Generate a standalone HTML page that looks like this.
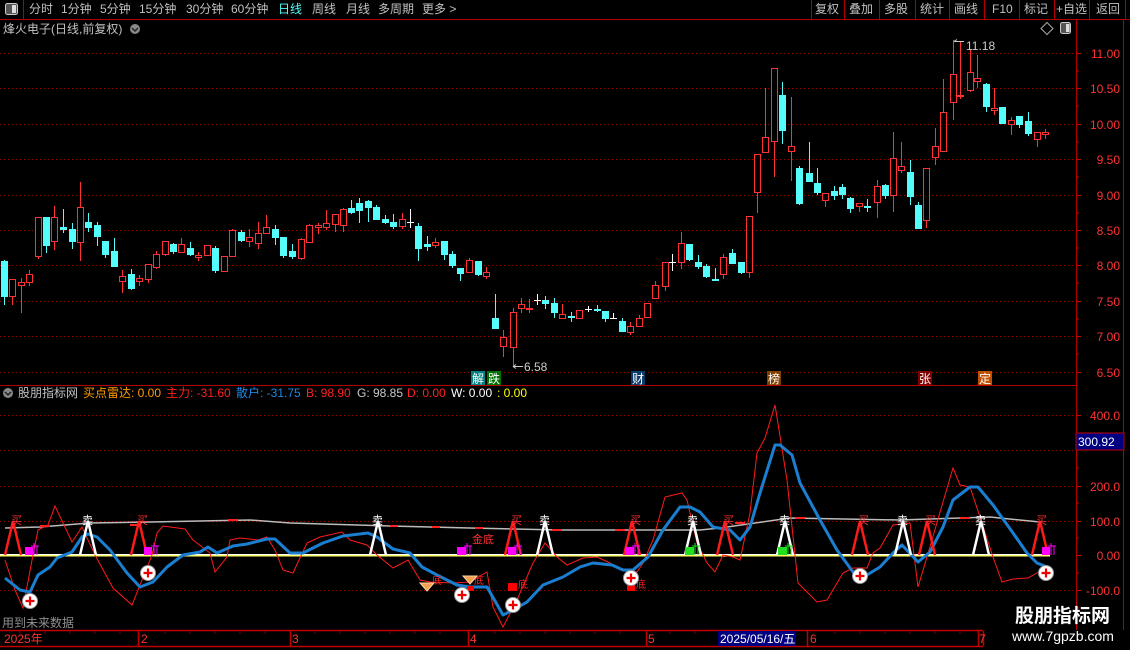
<!DOCTYPE html>
<html><head><meta charset="utf-8">
<style>
html,body{margin:0;padding:0;background:#000;}
body{width:1130px;height:650px;overflow:hidden;position:relative;font-family:"Liberation Sans","Noto Sans CJK SC",sans-serif;font-size:12px;color:#c0c0c0;}
.t{position:absolute;white-space:nowrap;line-height:14px;}
svg{position:absolute;left:0;top:0;}
</style></head><body>
<svg width="1130" height="650" xmlns="http://www.w3.org/2000/svg" font-family="Liberation Sans, Noto Sans CJK SC, sans-serif">
<!-- top nav -->
<g stroke="#b00000" stroke-width="1" fill="none">
<line x1="0" y1="19.5" x2="1130" y2="19.5"/>
<line x1="23.5" y1="0" x2="23.5" y2="19"/>
<line x1="811.5" y1="0" x2="811.5" y2="19"/><line x1="844.5" y1="0" x2="844.5" y2="19"/><line x1="879.5" y1="0" x2="879.5" y2="19"/><line x1="915.5" y1="0" x2="915.5" y2="19"/><line x1="949.5" y1="0" x2="949.5" y2="19"/><line x1="984.5" y1="0" x2="984.5" y2="19"/><line x1="1019.5" y1="0" x2="1019.5" y2="19"/><line x1="1054.5" y1="0" x2="1054.5" y2="19"/><line x1="1089.5" y1="0" x2="1089.5" y2="19"/><line x1="1125.5" y1="0" x2="1125.5" y2="19"/>
<line x1="1076.5" y1="20" x2="1076.5" y2="630"/>
<line x1="1123.5" y1="20" x2="1123.5" y2="630"/>
<line x1="0" y1="385.5" x2="1076" y2="385.5"/>
</g>
<rect x="5.5" y="3.5" width="12" height="11" rx="2" fill="#555" stroke="#ccc"/><rect x="12" y="5" width="4" height="8" fill="#ddd"/>
<rect x="1060.5" y="22.5" width="10" height="11" rx="2" fill="#555" stroke="#ccc"/><rect x="1066" y="24" width="3.5" height="8" fill="#ddd"/>
<path d="M1047 22.5L1053 28.5L1047 34.5L1041 28.5Z" fill="none" stroke="#aaa"/>
<circle cx="135" cy="29" r="5" fill="#888"/><path d="M132 28l3 3 3-3" stroke="#222" stroke-width="1.5" fill="none"/>
<circle cx="8" cy="393" r="5" fill="#888"/><path d="M5 392l3 3 3-3" stroke="#222" stroke-width="1.5" fill="none"/>

<!-- grids price -->
<g stroke="#a00000" stroke-dasharray="1,3" stroke-width="1">
<line x1="0" y1="53.5" x2="1076" y2="53.5"/><line x1="0" y1="88.5" x2="1076" y2="88.5"/><line x1="0" y1="124.5" x2="1076" y2="124.5"/><line x1="0" y1="159.5" x2="1076" y2="159.5"/><line x1="0" y1="195.5" x2="1076" y2="195.5"/><line x1="0" y1="230.5" x2="1076" y2="230.5"/><line x1="0" y1="265.5" x2="1076" y2="265.5"/><line x1="0" y1="301.5" x2="1076" y2="301.5"/><line x1="0" y1="336.5" x2="1076" y2="336.5"/><line x1="0" y1="372.5" x2="1076" y2="372.5"/>
<line x1="0" y1="415.5" x2="1076" y2="415.5"/><line x1="0" y1="450.5" x2="1076" y2="450.5"/><line x1="0" y1="486.5" x2="1076" y2="486.5"/><line x1="0" y1="521.5" x2="1076" y2="521.5"/><line x1="0" y1="590.5" x2="1076" y2="590.5"/>
</g>
<!-- axis ticks -->
<g stroke="#c00000">
<path d="M1076 53.5h5M1076 88.5h5M1076 124.5h5M1076 159.5h5M1076 195.5h5M1076 230.5h5M1076 265.5h5M1076 301.5h5M1076 336.5h5M1076 372.5h5M1076 71h3M1076 106h3M1076 142h3M1076 177h3M1076 213h3M1076 248h3M1076 283h3M1076 319h3M1076 354h3"/>
<path d="M1076 415.5h5M1076 486.5h5M1076 521.5h5M1076 555.5h5M1076 590.5h5M1076 433h3M1076 468h3M1076 503h3M1076 538h3M1076 573h3M1076 608h3"/>
</g>
<g fill="#ff3232" font-size="12" text-anchor="end">
<text x="1120" y="58">11.00</text><text x="1120" y="93">10.50</text><text x="1120" y="129">10.00</text><text x="1120" y="164">9.50</text><text x="1120" y="200">9.00</text><text x="1120" y="235">8.50</text><text x="1120" y="270">8.00</text><text x="1120" y="306">7.50</text><text x="1120" y="341">7.00</text><text x="1120" y="377">6.50</text>
<text x="1120" y="420">400.0</text><text x="1120" y="491">200.0</text><text x="1120" y="526">100.0</text><text x="1120" y="560">0.00</text><text x="1120" y="595">-100.0</text>
</g>
<rect x="1076" y="433" width="48" height="17" fill="#000080" stroke="#c00000"/>
<text x="1078" y="446" fill="#fff" font-size="12">300.92</text>

<!-- candles red -->
<g stroke="#ff3232" fill="#000" stroke-width="1">
<path d="M12.5 279V305M21.5 278V313M29.5 270V286M38.5 217V259M54.5 206V250M80.5 182V261M122.5 270V293M139.5 275V286M148.5 264V283M156.5 251V269M165.5 241V256M181.5 238V252M198.5 252V261M207.5 245V255M224.5 256V271M232.5 229V256M249.5 229V247M258.5 222V249M266.5 215V233M301.5 238V260M309.5 224V243M318.5 223V234M326.5 210V230M335.5 214V232M343.5 208V232M402.5 213V229M435.5 238V248M469.5 258V272M486.5 267V279M503.5 330V357M513.5 308V367M521.5 298V313M529.5 299V313M562.5 304V318M579.5 310V318M630.5 322V335M639.5 315V327M647.5 303V317M655.5 281V298M665.5 262V291M681.5 232V269M723.5 254V279M749.5 216V278M757.5 154V213M765.5 88V152M774.5 68V177M791.5 97V181M825.5 193V207M859.5 203V212M877.5 180V218M893.5 132V212M901.5 142V173M926.5 168V228M935.5 128V165M943.5 79V151M953.5 40V120M960.5 41V99M970.5 50V92M977.5 55V88M994.5 88V115M1011.5 117V135M1037.5 132V147M1045.5 129V139"/>
<rect x="9.5" y="279.5" width="6" height="17"/><rect x="18.5" y="282.5" width="6" height="3"/><rect x="26.5" y="274.5" width="6" height="8"/><rect x="35.5" y="217.5" width="6" height="39"/><rect x="51.5" y="217.5" width="6" height="24"/><rect x="77.5" y="207.5" width="6" height="35"/><rect x="119.5" y="276.5" width="6" height="5"/><rect x="136.5" y="278.5" width="6" height="3"/><rect x="145.5" y="264.5" width="6" height="15"/><rect x="153.5" y="254.5" width="6" height="13"/><rect x="162.5" y="241.5" width="6" height="13"/><rect x="178.5" y="244.5" width="6" height="8"/><rect x="195.5" y="255.5" width="6" height="2"/><rect x="204.5" y="245.5" width="6" height="10"/><rect x="221.5" y="256.5" width="6" height="15"/><rect x="229.5" y="230.5" width="6" height="26"/><rect x="246.5" y="237.5" width="6" height="4"/><rect x="255.5" y="233.5" width="6" height="10"/><rect x="263.5" y="227.5" width="6" height="6"/><rect x="298.5" y="239.5" width="6" height="19"/><rect x="306.5" y="225.5" width="6" height="17"/><rect x="315.5" y="225.5" width="6" height="2"/><rect x="323.5" y="223.5" width="6" height="4"/><rect x="332.5" y="214.5" width="6" height="10"/><rect x="340.5" y="209.5" width="6" height="16"/><rect x="399.5" y="219.5" width="6" height="7"/><rect x="432.5" y="242.5" width="6" height="3"/><rect x="466.5" y="260.5" width="6" height="12"/><rect x="483.5" y="272.5" width="6" height="4"/><rect x="500.5" y="337.5" width="6" height="9"/><rect x="510.5" y="312.5" width="6" height="35"/><rect x="518.5" y="304.5" width="6" height="4"/><rect x="526.5" y="308.5" width="6" height="1"/><rect x="559.5" y="314.5" width="6" height="4"/><rect x="576.5" y="310.5" width="6" height="8"/><rect x="627.5" y="326.5" width="6" height="6"/><rect x="636.5" y="318.5" width="6" height="8"/><rect x="644.5" y="303.5" width="6" height="14"/><rect x="652.5" y="285.5" width="6" height="13"/><rect x="662.5" y="262.5" width="6" height="24"/><rect x="678.5" y="243.5" width="6" height="19"/><rect x="720.5" y="257.5" width="6" height="17"/><rect x="746.5" y="216.5" width="6" height="56"/><rect x="754.5" y="154.5" width="6" height="38"/><rect x="762.5" y="137.5" width="6" height="15"/><rect x="771.5" y="68.5" width="6" height="73"/><rect x="788.5" y="146.5" width="6" height="5"/><rect x="822.5" y="193.5" width="6" height="7"/><rect x="856.5" y="203.5" width="6" height="3"/><rect x="874.5" y="186.5" width="6" height="16"/><rect x="890.5" y="158.5" width="6" height="37"/><rect x="898.5" y="166.5" width="6" height="4"/><rect x="923.5" y="168.5" width="6" height="52"/><rect x="932.5" y="146.5" width="6" height="11"/><rect x="940.5" y="112.5" width="6" height="39"/><rect x="950.5" y="74.5" width="6" height="28"/><rect x="957.5" y="95.5" width="6" height="1"/><rect x="967.5" y="72.5" width="6" height="18"/><rect x="974.5" y="78.5" width="6" height="3"/><rect x="991.5" y="108.5" width="6" height="2"/><rect x="1008.5" y="120.5" width="6" height="4"/><rect x="1034.5" y="132.5" width="6" height="7"/><rect x="1042.5" y="132.5" width="6" height="2"/>
</g>
<!-- candles cyan -->
<g stroke="#54fcfc" fill="#54fcfc" stroke-width="1">
<path d="M4.5 260V305M46.5 217V253M63.5 209V233M72.5 223V249M88.5 213V232M97.5 222V246M105.5 241V258M114.5 238V266M131.5 269V290M173.5 243V254M190.5 242V256M215.5 246V273M241.5 230V242M275.5 225V245M283.5 237V258M292.5 244V259M351.5 200V214M359.5 198V223M368.5 200V222M376.5 205V220M385.5 215V224M393.5 214V229M418.5 223V261M427.5 236V251M444.5 241V260M452.5 251V268M460.5 268V281M478.5 261V276M495.5 294V328M545.5 296V309M554.5 298V318M571.5 312V322M597.5 305V312M605.5 311V322M622.5 318V332M689.5 244V261M698.5 255V269M706.5 264V278M715.5 268V281M732.5 249V264M741.5 262V274M782.5 82V144M799.5 166V205M809.5 142V181M817.5 168V195M834.5 186V200M842.5 184V199M850.5 197V213M867.5 199V212M885.5 184V199M910.5 160V205M918.5 202V229M986.5 83V112M1002.5 107V124M1019.5 116V128M1028.5 112V136"/>
<rect x="1.5" y="261.5" width="6" height="35"/><rect x="43.5" y="217.5" width="6" height="28"/><rect x="60.5" y="227.5" width="6" height="2"/><rect x="69.5" y="229.5" width="6" height="12"/><rect x="85.5" y="222.5" width="6" height="5"/><rect x="94.5" y="225.5" width="6" height="11"/><rect x="102.5" y="241.5" width="6" height="13"/><rect x="111.5" y="251.5" width="6" height="15"/><rect x="128.5" y="274.5" width="6" height="14"/><rect x="170.5" y="244.5" width="6" height="7"/><rect x="187.5" y="248.5" width="6" height="6"/><rect x="212.5" y="248.5" width="6" height="22"/><rect x="238.5" y="232.5" width="6" height="8"/><rect x="272.5" y="229.5" width="6" height="8"/><rect x="280.5" y="237.5" width="6" height="18"/><rect x="289.5" y="251.5" width="6" height="5"/><rect x="348.5" y="208.5" width="6" height="4"/><rect x="356.5" y="203.5" width="6" height="7"/><rect x="365.5" y="201.5" width="6" height="6"/><rect x="373.5" y="207.5" width="6" height="12"/><rect x="382.5" y="219.5" width="6" height="3"/><rect x="390.5" y="222.5" width="6" height="4"/><rect x="415.5" y="226.5" width="6" height="22"/><rect x="424.5" y="244.5" width="6" height="2"/><rect x="441.5" y="241.5" width="6" height="13"/><rect x="449.5" y="254.5" width="6" height="11"/><rect x="457.5" y="268.5" width="6" height="5"/><rect x="475.5" y="261.5" width="6" height="13"/><rect x="492.5" y="318.5" width="6" height="10"/><rect x="542.5" y="300.5" width="6" height="3"/><rect x="551.5" y="303.5" width="6" height="9"/><rect x="568.5" y="316.5" width="6" height="1"/><rect x="594.5" y="309.5" width="6" height="1"/><rect x="602.5" y="311.5" width="6" height="7"/><rect x="619.5" y="321.5" width="6" height="10"/><rect x="686.5" y="244.5" width="6" height="15"/><rect x="695.5" y="262.5" width="6" height="4"/><rect x="703.5" y="266.5" width="6" height="10"/><rect x="712.5" y="279.5" width="6" height="1"/><rect x="729.5" y="253.5" width="6" height="10"/><rect x="738.5" y="262.5" width="6" height="10"/><rect x="779.5" y="95.5" width="6" height="35"/><rect x="796.5" y="168.5" width="6" height="35"/><rect x="806.5" y="173.5" width="6" height="8"/><rect x="814.5" y="183.5" width="6" height="9"/><rect x="831.5" y="191.5" width="6" height="4"/><rect x="839.5" y="187.5" width="6" height="7"/><rect x="847.5" y="198.5" width="6" height="10"/><rect x="864.5" y="206.5" width="6" height="1"/><rect x="882.5" y="185.5" width="6" height="10"/><rect x="907.5" y="172.5" width="6" height="24"/><rect x="915.5" y="205.5" width="6" height="23"/><rect x="983.5" y="84.5" width="6" height="22"/><rect x="999.5" y="107.5" width="6" height="16"/><rect x="1016.5" y="116.5" width="6" height="8"/><rect x="1025.5" y="121.5" width="6" height="12"/>
</g>
<path d="M410.5 209V228M407 222.5H414M537.5 294V305M534 300.5H541M588.5 306V312M585 309.5H592M613.5 313V319M610 318.5H617M672.5 254V271M669 262.5H676" stroke="#fff"/>
<!-- high/low labels -->
<path d="M513 366.5h10M513 366.5l3-2M513 366.5l3 2" stroke="#ccc"/>
<text x="524" y="371" fill="#ccc" font-size="12">6.58</text>
<path d="M954 41.5h10M954 41.5l3-2" stroke="#ccc"/>
<text x="966" y="50" fill="#ccc" font-size="12">11.18</text>
<!-- event markers -->
<g font-size="12">
<rect x="471" y="371" width="14" height="14" fill="#008080"/><text x="472" y="383" fill="#fff">解</text>
<rect x="487" y="371" width="14" height="14" fill="#007000"/><text x="488" y="383" fill="#fff">跌</text>
<rect x="631" y="371" width="14" height="14" fill="#0a3a6a"/><text x="632" y="383" fill="#fff">财</text>
<rect x="767" y="371" width="14" height="14" fill="#804000"/><text x="768" y="383" fill="#fff">榜</text>
<rect x="918" y="371" width="14" height="14" fill="#800000"/><text x="919" y="383" fill="#fff">张</text>
<rect x="978" y="371" width="14" height="14" fill="#c05000"/><text x="979" y="383" fill="#fff">定</text>
</g>

<!-- indicator -->
<polyline fill="none" stroke="#bbb" stroke-width="1.5" points="5,528 40,527 90,523 150,522 250,520 290,523 390,526 470,528 560,530 640,530 700,530 720,528 790,518 900,520 990,517 1040,522"/>
<g stroke="#ff2020" stroke-width="2"><path d="M40 526h10M130 525h10M228 520h10M390 526h8M432 527h8M475 528h8M552 530h10M615 530h10M735 523h10M795 518h10M960 518h10"/></g>
<line x1="0" y1="555.5" x2="1050" y2="555.5" stroke="#ffff66" stroke-width="2"/>
<line x1="0" y1="554.5" x2="1050" y2="554.5" stroke="#fff" stroke-width="1"/>
<polyline fill="none" stroke="#ff1a1a" stroke-width="1" points="5,560 15,590 23,608 33,555 38,530 48,525 55,506 72,542 82,527 95,555 113,588 132,605 152,555 157,533 163,526 185,529 193,540 210,553 215,572 227,557 230,540 240,538 258,540 267,537 275,550 283,570 293,573 307,543 320,537 342,532 350,540 367,545 377,555 393,568 408,560 420,580 430,582 453,583 470,582 487,572 493,607 503,627 517,600 533,563 545,543 557,557 567,565 583,558 597,557 610,563 623,570 637,572 643,563 653,540 665,497 682,493 687,500 697,543 707,563 715,572 723,555 733,557 740,560 750,513 757,453 765,438 775,405 787,480 798,583 817,602 827,600 843,573 853,568 867,568 873,553 880,548 893,525 910,523 918,587 927,557 943,502 953,468 960,485 970,487 980,517 993,557 1002,582 1013,579 1028,578 1042,570"/>
<polyline fill="none" stroke="#1a7fd0" stroke-width="3" stroke-linejoin="round" points="5,578 20,590 30,592 38,575 50,567 57,558 72,552 82,537 88,534 97,537 110,550 127,573 140,587 153,582 167,567 183,555 200,552 208,547 217,553 233,546 247,544 267,539 275,539 290,553 303,553 323,543 343,536 368,533 377,537 393,549 410,553 422,567 437,575 457,585 470,587 487,587 503,615 513,610 527,602 543,585 563,577 580,567 593,563 612,565 623,570 633,570 648,557 663,530 680,507 690,507 700,512 713,527 730,530 740,540 750,527 760,493 775,445 780,445 792,455 800,483 820,520 837,550 853,572 862,578 880,567 893,553 902,545 918,562 930,552 943,527 953,500 970,487 978,487 993,505 1013,533 1027,553 1037,563 1047,567"/>
<!-- buy triangles -->
<g fill="none" stroke="#ff1a1a" stroke-width="2.5"><path d="M5 555L13 521L21 555M131 555L139 521L147 555M505 555L513 521L521 555M624 555L632 521L640 555M717 555L725 521L733 555M852 555L860 521L868 555M919 555L927 521L935 555M1032 555L1040 521L1048 555"/></g>
<g fill="none" stroke="#fff" stroke-width="2.5"><path d="M80 555L88 521L96 555M370 555L378 521L386 555M537 555L545 521L553 555M685 555L693 521L701 555M777 555L785 521L793 555M895 555L903 521L911 555M973 555L981 521L989 555"/></g>
<g font-size="11" fill="#ff3030"><text x="11" y="524">买</text><text x="137" y="524">买</text><text x="511" y="524">买</text><text x="630" y="524">买</text><text x="723" y="524">买</text><text x="858" y="524">买</text><text x="925" y="524">买</text><text x="1036" y="524">买</text><text x="472" y="543">金底</text></g>
<g font-size="11" fill="#fff"><text x="82" y="524">卖</text><text x="372" y="524">卖</text><text x="539" y="524">卖</text><text x="687" y="524">卖</text><text x="779" y="524">卖</text><text x="897" y="524">卖</text><text x="975" y="524">卖</text></g>
<!-- magenta / green boxes -->
<g fill="#ff00ff"><rect x="25" y="547" width="8" height="8"/><rect x="144" y="547" width="8" height="8"/><rect x="457" y="547" width="9" height="8"/><rect x="508" y="547" width="8" height="8"/><rect x="625" y="547" width="9" height="8"/><rect x="1042" y="547" width="8" height="8"/></g>
<g stroke="#ff00ff" stroke-width="1"><path d="M34 543v12M31 546h8M37 546v9M154 543v12M151 546h8M157 546v9M467 543v12M464 546h8M470 546v9M517 543v12M514 546h8M520 546v9M635 543v12M632 546h8M638 546v9M1051 543v12M1048 546h8M1054 546v9"/></g>
<g fill="#20e020"><rect x="685" y="547" width="9" height="8"/><rect x="778" y="547" width="9" height="8"/></g>
<g stroke="#20e020"><path d="M695 543v12M692 546h8M698 546v9M788 543v12M785 546h8M791 546v9"/></g>
<!-- red squares + 底 -->
<g fill="#ff0000"><rect x="508" y="583" width="9" height="8"/><rect x="627" y="583" width="8" height="8"/><rect x="467" y="586" width="7" height="5"/></g>
<g font-size="10" fill="#ff2020"><text x="432" y="584">底</text><text x="474" y="584">底</text><text x="518" y="588">底</text><text x="636" y="588">底</text></g>
<!-- diamonds -->
<g fill="#f0a050" stroke="#ffd0a0"><path d="M420 583h14l-7 8z"/><path d="M463 576h14l-7 8z"/></g>
<!-- plus circles -->
<g>
<g transform="translate(30,601)"><circle r="7.5" fill="#fff" stroke="#999"/><path d="M-4.5 0h9M0 -4.5v9" stroke="#e00" stroke-width="2.2"/></g>
<g transform="translate(148,573)"><circle r="7.5" fill="#fff" stroke="#999"/><path d="M-4.5 0h9M0 -4.5v9" stroke="#e00" stroke-width="2.2"/></g>
<g transform="translate(462,595)"><circle r="7.5" fill="#fff" stroke="#999"/><path d="M-4.5 0h9M0 -4.5v9" stroke="#e00" stroke-width="2.2"/></g>
<g transform="translate(513,605)"><circle r="7.5" fill="#fff" stroke="#999"/><path d="M-4.5 0h9M0 -4.5v9" stroke="#e00" stroke-width="2.2"/></g>
<g transform="translate(631,578)"><circle r="7.5" fill="#fff" stroke="#999"/><path d="M-4.5 0h9M0 -4.5v9" stroke="#e00" stroke-width="2.2"/></g>
<g transform="translate(860,576)"><circle r="7.5" fill="#fff" stroke="#999"/><path d="M-4.5 0h9M0 -4.5v9" stroke="#e00" stroke-width="2.2"/></g>
<g transform="translate(1046,573)"><circle r="7.5" fill="#fff" stroke="#999"/><path d="M-4.5 0h9M0 -4.5v9" stroke="#e00" stroke-width="2.2"/></g>
</g>
<!-- bottom date bar -->
<g stroke="#c00000" stroke-width="1.5" fill="none">
<line x1="0" y1="630.5" x2="983" y2="630.5"/><line x1="0" y1="646.5" x2="983" y2="646.5"/>
<path d="M138.5 631v15M290.5 631v15M468.5 631v15M646.5 631v15M807.5 631v15M978.5 631v15M983.5 631v15"/>
</g>
<g stroke="#700000"><path d="M20 631v3M45 631v3M70 631v3M95 631v3M120 631v3M165 631v3M190 631v3M215 631v3M240 631v3M265 631v3M315 631v3M340 631v3M365 631v3M390 631v3M415 631v3M440 631v3M495 631v3M520 631v3M545 631v3M570 631v3M595 631v3M620 631v3M670 631v3M695 631v3M835 631v3M860 631v3M885 631v3M910 631v3M935 631v3M960 631v3"/></g>
<rect x="718" y="631" width="78" height="15" fill="#000080"/>
<g font-size="12" fill="#ff3232"><text x="4" y="643">2025年</text><text x="141" y="643">2</text><text x="292" y="643">3</text><text x="470" y="643">4</text><text x="648" y="643">5</text><text x="810" y="643">6</text><text x="979" y="643">7</text></g>
<text x="720" y="643" font-size="12" fill="#fff">2025/05/16/五</text>
<text x="2" y="627" font-size="12" fill="#909090">用到未来数据</text>
<text x="1015" y="622" font-size="19" font-weight="bold" fill="#fff">股朋指标网</text>
<text x="1012" y="641" font-size="14" fill="#fff">www.7gpzb.com</text>
</svg>

<div class="t" style="left:29px;top:2px;">分时</div>
<div class="t" style="left:61px;top:2px;">1分钟</div>
<div class="t" style="left:100px;top:2px;">5分钟</div>
<div class="t" style="left:139px;top:2px;">15分钟</div>
<div class="t" style="left:186px;top:2px;">30分钟</div>
<div class="t" style="left:231px;top:2px;">60分钟</div>
<div class="t" style="left:278px;top:2px;color:#54fcfc;">日线</div>
<div class="t" style="left:312px;top:2px;">周线</div>
<div class="t" style="left:346px;top:2px;">月线</div>
<div class="t" style="left:378px;top:2px;">多周期</div>
<div class="t" style="left:422px;top:2px;">更多 &gt;</div>
<div class="t" style="left:815px;top:2px;">复权</div>
<div class="t" style="left:849px;top:2px;">叠加</div>
<div class="t" style="left:884px;top:2px;">多股</div>
<div class="t" style="left:920px;top:2px;">统计</div>
<div class="t" style="left:954px;top:2px;">画线</div>
<div class="t" style="left:992px;top:2px;">F10</div>
<div class="t" style="left:1024px;top:2px;">标记</div>
<div class="t" style="left:1056px;top:2px;">+自选</div>
<div class="t" style="left:1096px;top:2px;">返回</div>
<div class="t" style="left:3px;top:22px;">烽火电子(日线,前复权)</div>

<div class="t" style="left:18px;top:386px;">股朋指标网</div>
<div class="t" style="left:83px;top:386px;color:#ff9a00;">买点雷达: 0.00</div>
<div class="t" style="left:166px;top:386px;color:#ff2020;">主力: -31.60</div>
<div class="t" style="left:236px;top:386px;color:#1e88e5;">散户: -31.75</div>
<div class="t" style="left:306px;top:386px;color:#ff2020;">B: 98.90</div>
<div class="t" style="left:357px;top:386px;color:#c8c8c8;">G: 98.85</div>
<div class="t" style="left:407px;top:386px;color:#ff2020;">D: 0.00</div>
<div class="t" style="left:451px;top:386px;color:#fff;">W: 0.00</div>
<div class="t" style="left:497px;top:386px;color:#ffff00;">: 0.00</div>
</body></html>
